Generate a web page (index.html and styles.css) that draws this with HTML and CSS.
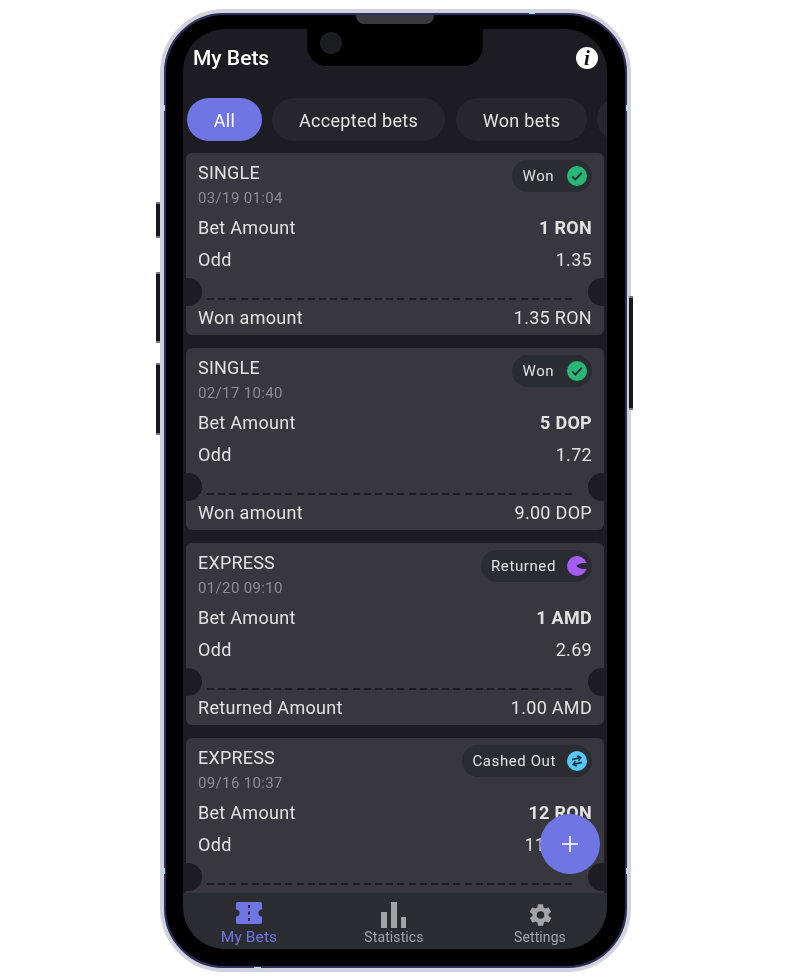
FILE: index.html
```html
<!DOCTYPE html>
<html lang="en">
<head>
  <meta charset="UTF-8">
  <meta name="viewport" content="width=device-width, initial-scale=1.0">
  <title>My Bets</title>
  <link rel="stylesheet" href="styles.css">
</head>
<body>
  <div class="phone">
    <span class="side-btn mute"></span>
    <span class="side-btn vol-up"></span>
    <span class="side-btn vol-down"></span>
    <span class="side-btn power"></span>
    <span class="band band-top"></span>
    <span class="band band-bottom"></span>
    <span class="band band-l1"></span>
    <span class="band band-l2"></span>
    <span class="band band-r1"></span>
    <span class="band band-r2"></span>
    <span class="speaker"></span>

    <div class="screen">
      <div class="notch"><span class="camera"></span></div>

      <header class="top-bar">
        <h1>My Bets</h1>
        <span class="info">i</span>
      </header>

      <nav class="chips">
        <span class="chip active">All</span>
        <span class="chip accepted">Accepted bets</span>
        <span class="chip won">Won bets</span>
        <span class="chip"></span>
      </nav>

      <main class="bets">
        <section class="card">
          <div class="card-head">
            <div>
              <div class="bet-type">SINGLE</div>
              <div class="bet-date">03/19 01:04</div>
            </div>
            <div class="status status-won">Won
              <svg class="status-icon" viewBox="0 0 20 20"><circle cx="10" cy="10" r="10" fill="#27b877"/><path d="M5.2 10.4l3.2 3.2 6.400-7" fill="none" stroke="#26303a" stroke-width="2"/></svg>
            </div>
          </div>
          <div class="row"><span>Bet Amount</span><b>1 RON</b></div>
          <div class="row"><span>Odd</span><span>1.35</span></div>
          <div class="tear"></div>
          <div class="row foot"><span>Won amount</span><span>1.35 RON</span></div>
          <i class="hole left"></i><i class="hole right"></i>
        </section>

        <section class="card">
          <div class="card-head">
            <div>
              <div class="bet-type">SINGLE</div>
              <div class="bet-date">02/17 10:40</div>
            </div>
            <div class="status status-won">Won
              <svg class="status-icon" viewBox="0 0 20 20"><circle cx="10" cy="10" r="10" fill="#27b877"/><path d="M5.2 10.4l3.2 3.2 6.400-7" fill="none" stroke="#26303a" stroke-width="2"/></svg>
            </div>
          </div>
          <div class="row"><span>Bet Amount</span><b>5 DOP</b></div>
          <div class="row"><span>Odd</span><span>1.72</span></div>
          <div class="tear"></div>
          <div class="row foot"><span>Won amount</span><span>9.00 DOP</span></div>
          <i class="hole left"></i><i class="hole right"></i>
        </section>

        <section class="card">
          <div class="card-head">
            <div>
              <div class="bet-type">EXPRESS</div>
              <div class="bet-date">01/20 09:10</div>
            </div>
            <div class="status">Returned
              <svg class="status-icon" viewBox="0 0 20 20"><circle cx="10" cy="10" r="10" fill="#a45cf2"/><path d="M21 7h-5.500a3 3 0 0 0 0 6H21z" fill="#2b2b32"/><path d="M11 10h7" stroke="#2c2140" stroke-width="1.800"/><path d="M13 7.500L9 10l4 2.500z" fill="#2c2140"/></svg>
            </div>
          </div>
          <div class="row"><span>Bet Amount</span><b>1 AMD</b></div>
          <div class="row"><span>Odd</span><span>2.69</span></div>
          <div class="tear"></div>
          <div class="row foot"><span>Returned Amount</span><span>1.00 AMD</span></div>
          <i class="hole left"></i><i class="hole right"></i>
        </section>

        <section class="card">
          <div class="card-head">
            <div>
              <div class="bet-type">EXPRESS</div>
              <div class="bet-date">09/16 10:37</div>
            </div>
            <div class="status">Cashed Out
              <svg class="status-icon" viewBox="0 0 20 20"><circle cx="10" cy="10" r="10" fill="#55c8f5"/><g transform="rotate(-14 10 10)" fill="none" stroke="#1f3a4d" stroke-width="1.700"><path d="M5.500 7.500H14M11.500 5l3 2.500-3 2.500M14.500 12.500H6M8.500 10l-3 2.500 3 2.500"/></g></svg>
            </div>
          </div>
          <div class="row"><span>Bet Amount</span><b>12 RON</b></div>
          <div class="row"><span>Odd</span><span>11.4048</span></div>
          <div class="tear"></div>
          <i class="hole left"></i><i class="hole right"></i>
        </section>
      </main>

      <button class="fab" aria-label="Add">
        <svg viewBox="0 0 16 16" width="16" height="16"><path d="M8 0v16M0 8h16" stroke="#fff" stroke-width="1.600"/></svg>
      </button>

      <footer class="tabs">
        <div class="tab current">
          <svg viewBox="0 0 28 26" width="28" height="26"><path fill="#6f76e4" fill-rule="evenodd" d="M2.500 0h23A1.500 1.500 0 0 1 27 1.500v6a3.500 3.500 0 0 0 0 7V20.500a1.500 1.500 0 0 1-1.500 1.500H2.500A1.500 1.500 0 0 1 1 20.500v-6a3.500 3.500 0 0 0 0-7v-6A1.500 1.500 0 0 1 2.500 0zM13 3v3h2V3zM13 9.500v3h2v-3zM13 16v3h2v-3z"/></svg>
          <span>My Bets</span>
        </div>
        <div class="tab">
          <svg viewBox="0 0 28 26" width="28" height="26"><path fill="#a3a3a8" d="M1 10h6v16H1zM11 0h6v26h-6zM21 15h5v11h-5z"/></svg>
          <span>Statistics</span>
        </div>
        <div class="tab">
          <svg viewBox="0 0 24 24" width="27" height="26"><path fill="#a3a3a8" d="M19.400 13a7.500 7.500 0 0 0 0-2l2.100-1.600a.5.5 0 0 0 .1-.6l-2-3.500a.5.5 0 0 0-.6-.2l-2.500 1a7.300 7.300 0 0 0-1.700-1l-.4-2.700a.5.5 0 0 0-.5-.4h-4a.5.5 0 0 0-.5.4l-.4 2.700a7.300 7.300 0 0 0-1.700 1l-2.500-1a.5.5 0 0 0-.6.2l-2 3.500a.5.5 0 0 0 .1.600L4.600 11a7.500 7.500 0 0 0 0 2l-2.100 1.600a.5.5 0 0 0-.1.600l2 3.500a.5.5 0 0 0 .6.200l2.500-1a7.300 7.300 0 0 0 1.700 1l.4 2.700a.5.5 0 0 0 .5.400h4a.5.5 0 0 0 .5-.4l.4-2.700a7.300 7.300 0 0 0 1.700-1l2.500 1a.5.5 0 0 0 .6-.2l2-3.500a.5.5 0 0 0-.1-.6zM12 15.500a3.500 3.500 0 1 1 0-7 3.500 3.500 0 0 1 0 7z"/></svg>
          <span>Settings</span>
        </div>
      </footer>
    </div>
  </div>
</body>
</html>
```

FILE: styles.css
```css
:root { --accent: #6f76e4; --bg: #1c1c22; --card: #38373e; --text: #e2e2e4; }
* { box-sizing: border-box; }
body { margin: 0; height: 980px; padding: 9px 0 0 160px; background: #fff; font-family: Roboto, sans-serif; color: var(--text); overflow: hidden; }
h1 { margin: 0; }

/* phone shell */
.phone { position: relative; width: 471px; height: 963px; padding: 16px 20px 19px 19px; background: #000; border: 4px solid #d2d2de; border-radius: 64px; box-shadow: inset 0 0 0 2px #2e2e5e; filter: blur(.4px); }
.side-btn { position: absolute; width: 4px; background: #17171f; border-top: 2px solid #77778a; border-bottom: 2px solid #77778a; }
.mute { left: -8px; top: 189px; height: 36px; }
.vol-up { left: -8px; top: 259px; height: 71px; }
.vol-down { left: -8px; top: 350px; height: 72px; }
.power { right: -6px; top: 283px; height: 114px; }
.band { position: absolute; background: #c3d6e2; }
.band-top { left: 365px; top: -4px; width: 6px; height: 5px; }
.band-bottom { left: 90px; bottom: -4px; width: 7px; height: 5px; }
.band-l1, .band-l2 { left: -4px; width: 5px; height: 6px; }
.band-r1, .band-r2 { right: -4px; width: 5px; height: 6px; }
.band-l1, .band-r1 { top: 92px; }
.band-l2, .band-r2 { top: 855px; }
.speaker { position: absolute; left: 192px; top: 2px; width: 78px; height: 9px; background: #3a3a3e; border-radius: 0 0 8px 8px; }

.screen { position: relative; height: 100%; display: flex; flex-direction: column; background: var(--bg); border-radius: 42px; overflow: hidden; }
.notch { position: absolute; left: 124px; top: 0; width: 176px; height: 37px; background: #000; border-radius: 0 0 20px 20px; z-index: 2; }
.camera { position: absolute; left: 13px; top: 3px; width: 22px; height: 22px; border-radius: 50%; background: #1b1d20; }

/* header */
.top-bar { height: 69px; flex: none; display: flex; align-items: center; justify-content: space-between; padding: 0 9px 12px 10px; }
.top-bar h1 { font-size: 21px; font-weight: 500; color: #fff; }
.info { width: 22px; height: 22px; border-radius: 50%; background: #fff; color: #111; font: italic bold 21px/22px "Liberation Serif", serif; text-align: center; }

.chips { display: flex; gap: 10px; padding-left: 4px; height: 43px; flex: none; overflow: hidden; }
.chip { flex: none; min-width: 130px; padding-top: 1px; display: flex; align-items: center; justify-content: center; border-radius: 22px; background: #26262c; font-size: 18px; letter-spacing: .3px; color: #e4e4e6; }
.chip.active { min-width: 75px; background: var(--accent); color: #fff; }
.chip.accepted { width: 173px; }
.chip.won { width: 131px; margin-left: 1px; }

/* bets list */
.bets { flex: 1; min-height: 0; overflow: hidden; padding: 12px 3px 0; display: flex; flex-direction: column; gap: 13px; }
.card { position: relative; flex: none; height: 182px; padding: 8px 12px 0; background: var(--card); border-radius: 6px; overflow: hidden; }
.card-head { display: flex; justify-content: space-between; align-items: flex-start; height: 50px; }
.bet-type { font-size: 18px; line-height: 24px; letter-spacing: .2px; }
.bet-date { margin-top: 1px; font-size: 15px; line-height: 24px; letter-spacing: .35px; color: #8c8c92; }
.status { display: flex; align-items: center; gap: 11px; height: 32px; margin-top: -1px; padding: 0 5px 0 10px; border-radius: 16px; background: #2b2b32; font-size: 15px; letter-spacing: .6px; white-space: nowrap; }
.status-won { gap: 13px; padding-left: 11px; letter-spacing: .5px; }
.status-icon { width: 20px; height: 20px; }
.row { display: flex; justify-content: space-between; height: 32px; align-items: center; font-size: 18px; letter-spacing: .3px; }
.row b { font-weight: 700; }
.tear { height: 2px; margin: 23px 20px 0 9px; background: repeating-linear-gradient(90deg, #1c1c22 0 7px, transparent 7px 11.2px); }
.foot { margin-top: 1px; }
.hole { position: absolute; top: 125px; width: 28px; height: 28px; border-radius: 50%; background: var(--bg); }
.hole.left { left: -12px; }
.hole.right { right: -12px; }

.fab { position: absolute; right: 7px; bottom: 75px; width: 60px; height: 60px; padding: 0; display: flex; align-items: center; justify-content: center; border: none; border-radius: 50%; background: var(--accent); z-index: 3; }
.fab svg { display: block; }

/* bottom tabs */
.tabs { height: 56px; flex: none; display: grid; grid-template-columns: 132px 158px 134px; background: #2b2b32; position: relative; z-index: 1; }
.tab { display: flex; flex-direction: column; align-items: center; justify-content: flex-end; padding-bottom: 2px; font-size: 14px; letter-spacing: .1px; color: #a3a3a8; }
.tab.current { color: var(--accent); font-size: 15.5px; }
.tab svg { display: block; }
.tab span { line-height: 19px; }
```
